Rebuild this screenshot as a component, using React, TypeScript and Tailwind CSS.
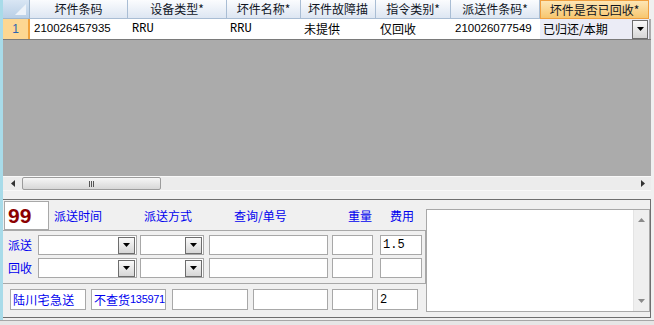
import React from 'react';

const cjk = { fontFamily: '"Noto Sans CJK SC", "Liberation Sans", sans-serif' };
const mono = { fontFamily: '"Liberation Mono", "Noto Sans CJK SC", monospace' };
const sans = { fontFamily: '"Liberation Sans", "Noto Sans CJK SC", sans-serif' };

const columns = [
    { title: '坏件条码', w: 'w-[98px]' },
    { title: '设备类型*', w: 'w-[99px]' },
    { title: '坏件名称*', w: 'w-[74px]' },
    { title: '坏件故障描', w: 'w-[75px]' },
    { title: '指令类别*', w: 'w-[75px]' },
    { title: '派送件条码*', w: 'w-[89px]' },
];

const DropButton = ({ className = '' }) => (
    <div className={`flex items-center justify-center border border-[#6d6d6d] bg-gradient-to-b from-[#fafafa] to-[#d6d6d6] ${className}`}>
        <svg width="7" height="4" viewBox="0 0 7 4">
            <path d="M0 0 H7 L3.5 4 Z" fill="#000" />
        </svg>
    </div>
);

const Combo = ({ w }) => (
    <div className={`${w} h-[20px] border border-[#a8a8a8] bg-white flex justify-end items-center pr-[1px]`}>
        <DropButton className="w-[17px] h-[17px]" />
    </div>
);

const Box = ({ w, children = null, className = '' }) => (
    <div className={`${w} border border-[#a8a8a8] bg-white flex items-center px-[2px] text-[12px] leading-none whitespace-nowrap overflow-hidden ${className}`}>
        {children}
    </div>
);

const Grid = () => (
    <div className="h-[176px] flex flex-col bg-[#ababab]">
        {/* header */}
        <div className="flex h-[19px] text-[12px] text-[#10151f]" style={cjk}>
            <div className="w-[27px] h-[19px] relative bg-gradient-to-b from-[#d9e6f4] to-[#b9cfe6] border-r border-b border-[#9eb6ce]">
                <svg className="absolute right-[3px] bottom-[3px]" width="11" height="11" viewBox="0 0 11 11">
                    <path d="M11 0 V11 H0 Z" fill="#eef3f9" />
                </svg>
            </div>
            {columns.map((c) => (
                <div key={c.title} className={`${c.w} h-[19px] flex items-center justify-center bg-gradient-to-b from-[#fbfcfe] to-[#dde6f2] border-r border-b border-[#a9bdd4]`}>
                    {c.title}
                </div>
            ))}
            <div className="w-[109px] h-[19px] flex items-center justify-center bg-gradient-to-b from-[#fde6b4] to-[#f7c66e] border border-[#f0a040]">
                坏件是否已回收*
            </div>
            <div className="flex-1 bg-[#f0f0f0]" />
        </div>
        {/* data row */}
        <div className="flex h-[21px] text-[12px] text-black border-b border-[#7a7a7a] bg-white">
            <div className="w-[27px] flex items-center justify-center bg-[#fdd792] border-r-2 border-[#f2a23c] text-[#2a63b0]" style={sans}>1</div>
            <div className="w-[98px] flex items-center pl-[4px] text-[11.5px]" style={sans}>210026457935</div>
            <div className="w-[99px] flex items-center pl-[4px] text-[12px]" style={mono}>RRU</div>
            <div className="w-[74px] flex items-center pl-[3px] text-[12px]" style={mono}>RRU</div>
            <div className="w-[75px] flex items-center pl-[3px]" style={cjk}>未提供</div>
            <div className="w-[75px] flex items-center pl-[4px]" style={cjk}>仅回收</div>
            <div className="w-[89px] flex items-center pl-[4px] text-[11.5px]" style={sans}>210026077549</div>
            <div className="w-[109px] flex items-center justify-between pl-[3px] pr-[1px] bg-[#ebecf6]" style={cjk}>
                <span>已归还/本期</span>
                <DropButton className="w-[16px] h-[19px]" />
            </div>
            <div className="flex-1 bg-[#ababab]" />
        </div>
        <div className="flex-1" />
    </div>
);

const HScroll = () => (
    <div className="h-[15px] flex items-center bg-[#ececec] border-y border-[#f8f8f8]">
        <div className="w-[19px] flex justify-center">
            <svg width="4" height="7" viewBox="0 0 4 7"><path d="M4 0 V7 L0 3.5 Z" fill="#333" /></svg>
        </div>
        <div className="w-[139px] h-[13px] rounded-[2px] border border-[#9c9c9c] bg-gradient-to-b from-[#f6f6f6] to-[#d7d7d7] flex items-center justify-center">
            <div className="flex gap-[1px]">
                <div className="w-[1px] h-[6px] bg-[#555]" />
                <div className="w-[1px] h-[6px] bg-[#555]" />
                <div className="w-[1px] h-[6px] bg-[#555]" />
            </div>
        </div>
        <div className="flex-1" />
        <div className="w-[16px] flex justify-center">
            <svg width="4" height="7" viewBox="0 0 4 7"><path d="M0 0 V7 L4 3.5 Z" fill="#333" /></svg>
        </div>
    </div>
);

const Lower = () => (
    <div className="h-[119px] flex border-t border-b border-r border-[#6e6e6e] text-[12px]" style={cjk}>
        {/* left form */}
        <div className="w-[423px] flex flex-col">
            <div className="h-[30px] flex items-start pl-[1px] pt-[1px]">
                <div className="w-[45px] h-[29px] border border-[#a8a8a8] bg-white flex items-center pl-[3px] text-[#8b0000] text-[21px] font-bold leading-none" style={sans}>
                    99
                </div>
                <div className="h-[29px] flex items-center text-[#0000ee]">
                    <span className="ml-[5px] w-[48px]">派送时间</span>
                    <span className="ml-[42px] w-[48px]">派送方式</span>
                    <span className="ml-[42px] w-[54px]">查询/单号</span>
                    <span className="ml-[60px] w-[24px]">重量</span>
                    <span className="ml-[18px] w-[24px]">费用</span>
                </div>
            </div>
            <div className="h-[54px] flex flex-col gap-[3px] pt-[4px] border-t border-b border-r border-[#a8a8a8]">
                <div className="h-[20px] flex items-center">
                    <span className="ml-[5px] w-[30px] text-[#0000ee]">派送</span>
                    <Combo w="w-[99px]" />
                    <div className="w-[3px]" />
                    <Combo w="w-[64px]" />
                    <Box w="w-[119px] h-[20px] ml-[5px]" />
                    <Box w="w-[41px] h-[20px] ml-[4px]" />
                    <Box w="w-[42px] h-[20px] ml-[7px]">
                        <span style={mono}>1.5</span>
                    </Box>
                </div>
                <div className="h-[20px] flex items-center">
                    <span className="ml-[5px] w-[30px] text-[#0000ee]">回收</span>
                    <Combo w="w-[99px]" />
                    <div className="w-[3px]" />
                    <Combo w="w-[64px]" />
                    <Box w="w-[119px] h-[20px] ml-[5px]" />
                    <Box w="w-[41px] h-[20px] ml-[4px]" />
                    <Box w="w-[42px] h-[20px] ml-[7px]" />
                </div>
            </div>
            <div className="flex-1 flex items-start pt-[5px] pl-[7px]">
                <Box w="w-[76px] h-[21px]" className="text-[#0000ee] tracking-[0.3px]">陆川宅急送</Box>
                <Box w="w-[75px] h-[21px] ml-[5px]" className="text-[#0000ee] px-[1px]">
                    不查货<span className="text-[11px] tracking-[-0.3px]" style={sans}>135971</span>
                </Box>
                <Box w="w-[76px] h-[21px] ml-[6px]" />
                <Box w="w-[75px] h-[21px] ml-[5px]" />
                <Box w="w-[41px] h-[21px] ml-[4px]" />
                <Box w="w-[41px] h-[21px] ml-[4px]">
                    <span style={mono}>2</span>
                </Box>
            </div>
        </div>
        {/* remarks */}
        <div className="mt-[9px] w-[224px] h-[103px] border border-[#a8a8a8] bg-white flex justify-end">
            <div className="w-[16px] h-full bg-[#efefef] border-l border-[#e4e4e4] flex flex-col items-center justify-between py-[8px]">
                <svg width="7" height="4" viewBox="0 0 7 4"><path d="M0 4 H7 L3.5 0 Z" fill="#8a8a8a" /></svg>
                <svg width="7" height="4" viewBox="0 0 7 4"><path d="M0 0 H7 L3.5 4 Z" fill="#8a8a8a" /></svg>
            </div>
        </div>
    </div>
);

export default function App() {
    return (
        <div className="w-[654px] h-[325px] bg-[#f0f0f0] flex flex-col overflow-hidden">
            <div className="flex h-[320px]">
                <div className="w-[3px] bg-[#a8dbe9]" />
                <div className="w-[648px] flex flex-col">
                    <Grid />
                    <HScroll />
                    <div className="h-[8px]" />
                    <Lower />
                </div>
            </div>
            <div className="h-[1px] bg-[#a6a6a6]" />
            <div className="flex-1 bg-[#e6e6e6]" />
        </div>
    );
}
